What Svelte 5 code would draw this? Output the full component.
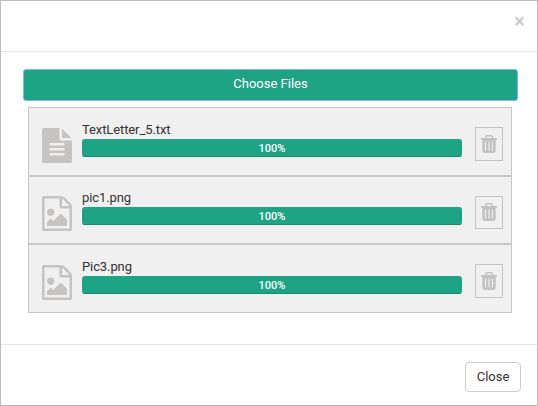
<script>
  const files = [
    { name: 'TextLetter_5.txt', kind: 'text', progress: 100 },
    { name: 'pic1.png', kind: 'image', progress: 100 },
    { name: 'Pic3.png', kind: 'image', progress: 100 }
  ];
  const icons = {
    text: 'M1596 476q14 14 28 36h-472v-472q22 14 36 28zm-476 164h544v1056q0 40-28 68t-68 28h-1344q-40 0-68-28t-28-68v-1600q0-40 28-68t68-28h800v544q0 40 28 68t68 28zm160 736v-64q0-14-9-23t-23-9h-704q-14 0-23 9t-9 23v64q0 14 9 23t23 9h704q14 0 23-9t9-23zm0-256v-64q0-14-9-23t-23-9h-704q-14 0-23 9t-9 23v64q0 14 9 23t23 9h704q14 0 23-9t9-23zm0-256v-64q0-14-9-23t-23-9h-704q-14 0-23 9t-9 23v64q0 14 9 23t23 9h704q14 0 23-9t9-23z',
    image: 'M1596 380q28 28 48 76t20 88v1152q0 40-28 68t-68 28h-1344q-40 0-68-28t-28-68v-1600q0-40 28-68t68-28h896q40 0 88 20t76 48zm-444-244v376h376q-10-29-22-41l-313-313q-12-12-41-22zm384 1528v-1024h-416q-40 0-68-28t-28-68v-416h-768v1536h1280zm-128-448v320h-1024v-192l192-192 128 128 384-384zm-832-192q-80 0-136-56t-56-136 56-136 136-56 136 56 56 136-56 136-136 56z'
  };
</script>

<div class="modal">
  <header>
    <button class="dismiss" aria-label="Dismiss">×</button>
  </header>
  <main>
    <button class="choose">Choose Files</button>
    <ul>
      {#each files as file}
        <li>
          <svg class="kind" viewBox="128 0 1536 1792" aria-hidden="true"><path d={icons[file.kind]} /></svg>
          <div class="info">
            <div class="name">{file.name}</div>
            <div class="track">
              <div class="bar" style="width: {file.progress}%">{file.progress}%</div>
            </div>
          </div>
          <button class="remove" aria-label="Remove">
            <svg viewBox="0 0 16 18" aria-hidden="true">
              <path d="M4.7 3.4V2Q4.7 0.8 6 0.8H10Q11.3 0.8 11.3 2V3.4" fill="none" stroke="#c3c2c2" stroke-width="1.5" />
              <path d="M0.7 3H15.3Q16 3 16 3.8V5H0V3.8Q0 3 0.7 3Z" />
              <path fill-rule="evenodd" d="M1.3 5H14.7V15.6Q14.7 18 12.3 18H3.7Q1.3 18 1.3 15.6ZM4 6.5V15.5H5.1V6.5ZM7.4 6.5V15.5H8.6V6.5ZM10.9 6.5V15.5H12V6.5Z" />
            </svg>
          </button>
        </li>
      {/each}
    </ul>
  </main>
  <footer>
    <button class="close">Close</button>
  </footer>
</div>

<style>
  * { box-sizing: border-box; }
  button { font: inherit; margin: 0; padding: 0; }
  .modal {
    width: 538px;
    height: 406px;
    border: 1px solid #bbb;
    background: #fff;
    color: #333;
    font: 13px/18px Roboto, sans-serif;
    display: flex;
    flex-direction: column;
  }
  header {
    height: 51px;
    border-bottom: 1px solid #e5e5e5;
    display: flex;
    justify-content: flex-end;
    padding: 11px 12px 0 0;
  }
  .dismiss {
    width: 11px;
    height: 20px;
    border: 0;
    background: none;
    color: #ccc;
    font: bold 19.5px/20px Roboto, sans-serif;
  }
  main { height: 292px; padding: 17px 19px 0 22px; }
  .choose {
    display: block;
    width: 495px;
    height: 32px;
    border: 1px solid #7db5fa;
    border-radius: 3px;
    background: #1fa385;
    color: #fff;
    padding-bottom: 3px;
  }
  ul { list-style: none; margin: 6px 0 0 5px; padding: 0; width: 484px; }
  li {
    display: flex;
    height: 69px;
    border: 1px solid #c8c8c8;
    background: #f0f0f0;
    padding: 13px 8px 0 13px;
  }
  li:nth-child(2) { height: 68px; padding-top: 12px; }
  .kind { width: 30px; height: 35px; margin-top: 7px; fill: #c6c4c3; }
  .info { width: 380px; margin-left: 10px; }
  .name { height: 18px; line-height: 18px; letter-spacing: -0.1px; }
  .track { height: 18px; border-radius: 3px; overflow: hidden; background: #f5f5f5; }
  .bar {
    height: 18px;
    background: #1fa385;
    box-shadow: inset 0 -1px 0 #1a8b71;
    color: #fff;
    font-size: 11px;
    font-weight: 500;
    line-height: 20px;
    text-align: center;
  }
  .remove {
    display: flex;
    justify-content: center;
    width: 28px;
    height: 34px;
    margin: 6px 0 0 13px;
    padding-top: 7px;
    border: 1px solid #c3c3c3;
    background: #f0f0f0;
  }
  li:nth-child(2) .remove { height: 33px; margin-top: 7px; padding-top: 6px; }
  .remove svg { width: 16px; height: 18px; fill: #c3c2c2; }
  footer {
    flex: 1;
    border-top: 1px solid #e5e5e5;
    display: flex;
    justify-content: flex-end;
    padding: 17px 16px 0 0;
  }
  .close {
    width: 56px;
    height: 30px;
    border: 1px solid #ccc;
    border-radius: 4px;
    background: #fff;
    color: #333;
  }
</style>
